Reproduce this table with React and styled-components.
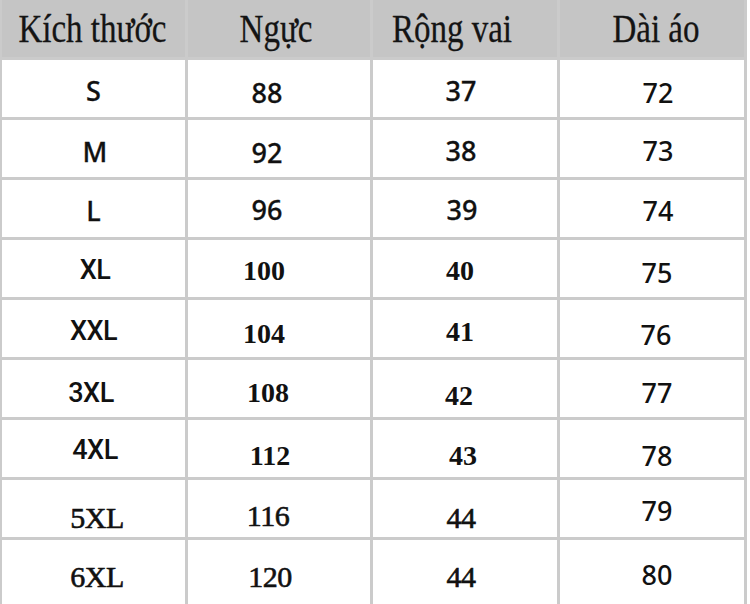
import React from "react";
import styled, { createGlobalStyle, css } from "styled-components";

const Global = createGlobalStyle`
  html, body { margin: 0; padding: 0; background: #ffffff; }
  body { width: 750px; height: 604px; overflow: hidden; }
`;

const Sheet = styled.div`
  width: 750px;
  height: 604px;
  background: #ffffff;
  overflow: hidden;
`;

const Table = styled.div`
  width: 747px;
  display: grid;
  grid-template-columns: 183px 182px 184px 184px;
  grid-template-rows: repeat(9, 57px) 64px;
  column-gap: 3px;
  row-gap: 3px;
  padding: 0 3px 0 2px;
  background: #cbcbcb;
  box-sizing: border-box;
`;

const HeadCell = styled.div`
  background: #c5c5c5;
  display: flex;
  align-items: center;
  justify-content: center;
  overflow: hidden;
`;

const HeadText = styled.span`
  font-family: "Liberation Serif", "Times New Roman", serif;
  font-size: 33px;
  line-height: 1;
  color: #141414;
  white-space: nowrap;
  -webkit-text-stroke: 0.25px #141414;
  transform: translate(${(p) => p.$dx}px, 1px) scaleY(1.2);
`;

const Cell = styled.div`
  background: #ffffff;
  display: flex;
  align-items: center;
  justify-content: center;
`;

const fonts = {
  sans: css`
    font-family: "Noto Sans", "Open Sans", sans-serif;
    font-weight: 500;
    font-size: 27px;
    -webkit-text-stroke: 0.3px #111;
  `,
  light: css`
    font-family: "Noto Sans", "Open Sans", sans-serif;
    font-weight: 500;
    font-size: 27px;
  `,
  cond: css`
    font-family: Roboto, "Liberation Sans", sans-serif;
    font-weight: 500;
    font-size: 27px;
    letter-spacing: -0.5px;
  `,
  bold: css`
    font-family: "Liberation Serif", "Times New Roman", serif;
    font-weight: 700;
    font-size: 28px;
  `,
  serif: css`
    font-family: "Liberation Serif", "Times New Roman", serif;
    font-weight: 400;
    font-size: 30px;
    letter-spacing: -0.5px;
    -webkit-text-stroke: 0.6px #111;
  `,
};

const CellText = styled.span`
  ${(p) => fonts[p.$font]}
  line-height: 1;
  color: #111111;
  white-space: nowrap;
  transform: translate(${(p) => p.$dx}px, ${(p) => p.$dy}px);
`;

const headers = [
  ["Kích thước", -1],
  ["Ngực", -3],
  ["Rộng vai", -13],
  ["Dài áo", 4],
];

// each cell: [text, font, dx, dy]
const rows = [
  [["S", "sans", 0, 1.5], ["88", "sans", -12, 4], ["37", "sans", -4, 1.5], ["72", "light", 6, 4]],
  [["M", "sans", 1.5, 2.5], ["92", "sans", -12, 3.5], ["38", "sans", -4, 1.5], ["73", "light", 6, 1.5]],
  [["L", "sans", 0, 1.5], ["96", "sans", -12, 0.5], ["39", "sans", -3, 0.5], ["74", "light", 6, 1.5]],
  [["XL", "cond", 1.5, 1.5], ["100", "bold", -15, 1.5], ["40", "bold", -5, 1.5], ["75", "light", 5, 3.5]],
  [["XXL", "cond", 0, 2.5], ["104", "bold", -15, 4.5], ["41", "bold", -5, 2.5], ["76", "light", 4, 5.5]],
  [["3XL", "cond", -2.5, 4.5], ["108", "bold", -11, 3.5], ["42", "bold", -6, 6.5], ["77", "light", 5, 3.5]],
  [["4XL", "cond", 1.5, 1.5], ["112", "bold", -9, 6.5], ["43", "bold", -2, 6.5], ["78", "light", 5, 6.5]],
  [["5XL", "serif", 3.5, 8.5], ["116", "serif", -11, 6.5], ["44", "serif", -4, 8.5], ["79", "light", 5, 1.5]],
  [["6XL", "serif", 3.5, 5], ["120", "serif", -9, 5], ["44", "serif", -4, 5], ["80", "light", 5, 2]],
];

export default function App() {
  return (
    <Sheet>
      <Global />
      <Table>
        {headers.map(([t, dx]) => (
          <HeadCell key={t}>
            <HeadText $dx={dx}>{t}</HeadText>
          </HeadCell>
        ))}
        {rows.map((row, ri) =>
          row.map(([t, f, dx, dy], ci) => (
            <Cell key={`${ri}-${ci}`}>
              <CellText $font={f} $dx={dx} $dy={dy}>
                {t}
              </CellText>
            </Cell>
          ))
        )}
      </Table>
    </Sheet>
  );
}
